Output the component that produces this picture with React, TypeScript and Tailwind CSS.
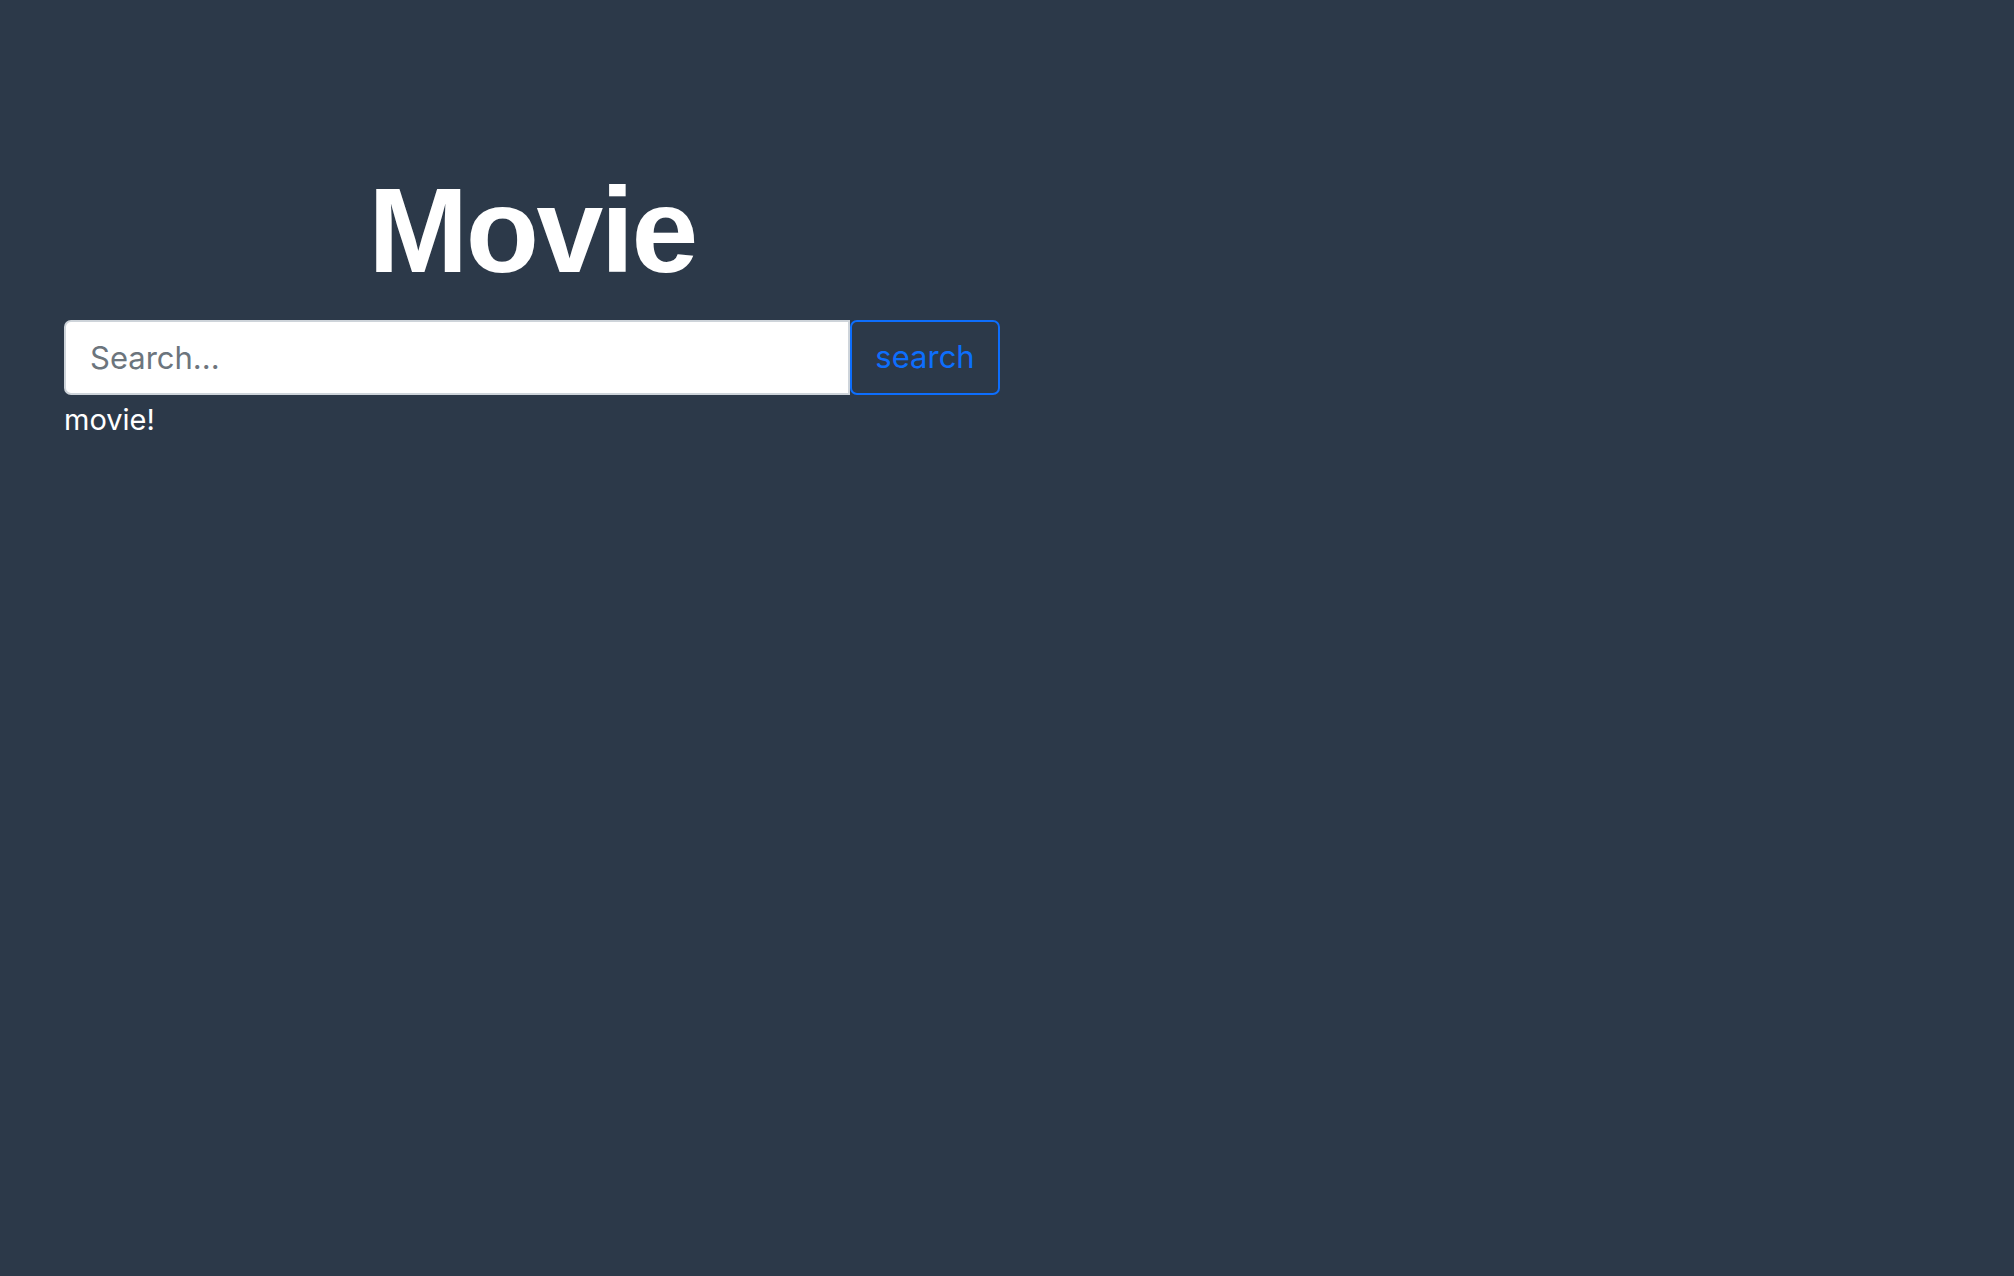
import React from "react";

export default function App() {
  return (
    <div className="min-h-screen w-full bg-[#2c3949] pt-[158px] pl-[64px]">
      <div className="w-[936px]">
        <h1 className="text-center text-[120px] leading-[144px] font-bold text-white tracking-[-2.5px] [font-family:'Liberation_Sans',Arial,sans-serif]">
          Movie
        </h1>
        <div className="mt-[18px] flex h-[75px]">
          <input
            className="w-[786px] h-full rounded-l-[7px] border-2 border-[#ced4da] bg-white px-[24px] text-[31px] text-[#212529] outline-none placeholder:text-[#6c757d] [font-family:Inter,sans-serif]"
            placeholder="Search..."
          />
          <button className="w-[150px] h-full rounded-[7px] border-2 border-[#0d6efd] bg-transparent text-[31px] text-[#0d6efd] [font-family:Inter,sans-serif]">
            search
          </button>
        </div>
        <p className="mt-[3px] text-[29px] leading-[43px] text-white [font-family:Inter,sans-serif]">
          movie!
        </p>
      </div>
    </div>
  );
}
